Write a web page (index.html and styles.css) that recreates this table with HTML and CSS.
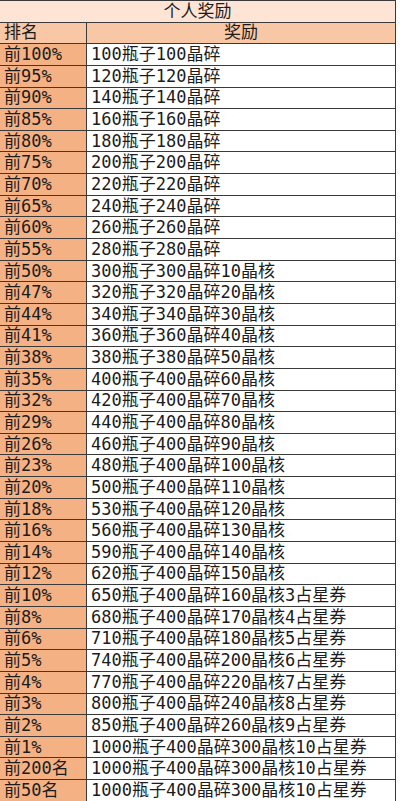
FILE: index.html
```html
<!DOCTYPE html>
<html lang="zh">
<head>
<meta charset="utf-8">
<link rel="stylesheet" href="styles.css">
</head>
<body>
<div class="sheet">
  <div class="cell title">个人奖励</div>
  <div class="cell head">排名</div>
  <div class="cell head center">奖励</div>
  <div class="cell rank">前100%</div><div class="cell prize">100瓶子100晶碎</div>
  <div class="cell rank">前95%</div><div class="cell prize">120瓶子120晶碎</div>
  <div class="cell rank">前90%</div><div class="cell prize">140瓶子140晶碎</div>
  <div class="cell rank">前85%</div><div class="cell prize">160瓶子160晶碎</div>
  <div class="cell rank">前80%</div><div class="cell prize">180瓶子180晶碎</div>
  <div class="cell rank">前75%</div><div class="cell prize">200瓶子200晶碎</div>
  <div class="cell rank">前70%</div><div class="cell prize">220瓶子220晶碎</div>
  <div class="cell rank">前65%</div><div class="cell prize">240瓶子240晶碎</div>
  <div class="cell rank">前60%</div><div class="cell prize">260瓶子260晶碎</div>
  <div class="cell rank">前55%</div><div class="cell prize">280瓶子280晶碎</div>
  <div class="cell rank">前50%</div><div class="cell prize">300瓶子300晶碎10晶核</div>
  <div class="cell rank">前47%</div><div class="cell prize">320瓶子320晶碎20晶核</div>
  <div class="cell rank">前44%</div><div class="cell prize">340瓶子340晶碎30晶核</div>
  <div class="cell rank">前41%</div><div class="cell prize">360瓶子360晶碎40晶核</div>
  <div class="cell rank">前38%</div><div class="cell prize">380瓶子380晶碎50晶核</div>
  <div class="cell rank">前35%</div><div class="cell prize">400瓶子400晶碎60晶核</div>
  <div class="cell rank">前32%</div><div class="cell prize">420瓶子400晶碎70晶核</div>
  <div class="cell rank">前29%</div><div class="cell prize">440瓶子400晶碎80晶核</div>
  <div class="cell rank">前26%</div><div class="cell prize">460瓶子400晶碎90晶核</div>
  <div class="cell rank">前23%</div><div class="cell prize">480瓶子400晶碎100晶核</div>
  <div class="cell rank">前20%</div><div class="cell prize">500瓶子400晶碎110晶核</div>
  <div class="cell rank">前18%</div><div class="cell prize">530瓶子400晶碎120晶核</div>
  <div class="cell rank">前16%</div><div class="cell prize">560瓶子400晶碎130晶核</div>
  <div class="cell rank">前14%</div><div class="cell prize">590瓶子400晶碎140晶核</div>
  <div class="cell rank">前12%</div><div class="cell prize">620瓶子400晶碎150晶核</div>
  <div class="cell rank">前10%</div><div class="cell prize">650瓶子400晶碎160晶核3占星券</div>
  <div class="cell rank">前8%</div><div class="cell prize">680瓶子400晶碎170晶核4占星券</div>
  <div class="cell rank">前6%</div><div class="cell prize">710瓶子400晶碎180晶核5占星券</div>
  <div class="cell rank">前5%</div><div class="cell prize">740瓶子400晶碎200晶核6占星券</div>
  <div class="cell rank">前4%</div><div class="cell prize">770瓶子400晶碎220晶核7占星券</div>
  <div class="cell rank">前3%</div><div class="cell prize">800瓶子400晶碎240晶核8占星券</div>
  <div class="cell rank">前2%</div><div class="cell prize">850瓶子400晶碎260晶核9占星券</div>
  <div class="cell rank">前1%</div><div class="cell prize">1000瓶子400晶碎300晶核10占星券</div>
  <div class="cell rank">前200名</div><div class="cell prize">1000瓶子400晶碎300晶核10占星券</div>
  <div class="cell rank">前50名</div><div class="cell prize">1000瓶子400晶碎300晶核10占星券</div>
</div>
</body>
</html>
```
FILE: styles.css
```css
* { box-sizing: border-box; }
html, body { margin: 0; padding: 0; background: #ffffff; }
body { width: 400px; height: 801px; overflow: hidden; }
.sheet {
  width: 396px;
  display: grid;
  grid-template-columns: 87px 309px;
  grid-auto-rows: 21.65px;
  border-top: 1px solid #3a3a3a;
  font-family: "DejaVu Sans Mono", "Noto Sans CJK SC", sans-serif;
  font-size: 17px;
  color: #1c1c1c;
}
.cell {
  border-right: 1px solid #3a3a3a;
  border-bottom: 1px solid #3a3a3a;
  display: flex;
  align-items: center;
  padding-left: 4px;
  line-height: 1;
  white-space: nowrap;
  overflow: hidden;
}
.title {
  grid-column: 1 / 3;
  justify-content: center;
  padding-left: 0;
  background: #fde4d4;
}
.head { background: #f8c7a5; }
.center { justify-content: center; padding-left: 0; }
.rank { background: #f4b183; }
.prize { background: #ffffff; }
```
